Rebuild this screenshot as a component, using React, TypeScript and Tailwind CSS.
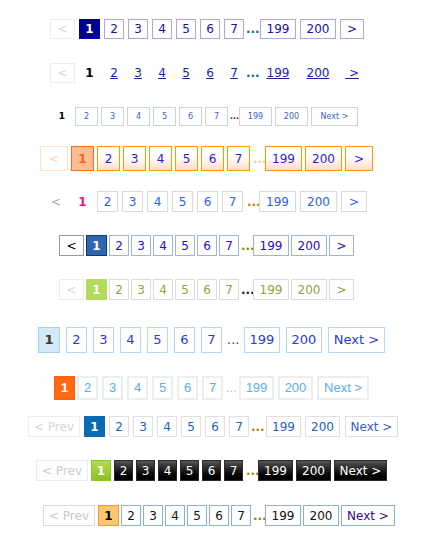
type Item = { t: string; c: string };

const PAGES = ["2", "3", "4", "5", "6", "7"];

function build(o: { prev?: Item; cur: Item; num: string; dots: Item; wide: string; next: Item }): Item[] {
  return [
    ...(o.prev ? [o.prev] : []),
    o.cur,
    ...PAGES.map((t) => ({ t, c: o.num })),
    o.dots,
    { t: "199", c: o.wide },
    { t: "200", c: o.wide },
    o.next,
  ];
}

function Row({ className, items }: { className: string; items: Item[] }) {
  return (
    <div className={`flex items-center ${className}`}>
      {items.map((it, i) => (
        <span key={i} className={it.c}>
          {it.t}
        </span>
      ))}
    </div>
  );
}

// shared box bases, one per row height
const b20 = "flex h-[20px] items-center justify-center border";
const b19 = "flex h-[19px] items-center justify-center border";
const b25 = "flex h-[25px] items-center justify-center border";
const b21 = "flex h-[21px] items-center justify-center border";
const b26 = "flex h-[26px] items-center justify-center border";
const b24 = "flex h-[24px] items-center justify-center border-2";

const r1 = build({
  prev: { t: "<", c: `${b20} w-[25px] border-[#ececec] text-[#d8d8d8]` },
  cur: { t: "1", c: `${b20} w-[21px] border-[#000099] bg-[#000099] font-bold text-white` },
  num: `${b20} w-[20px] border-[#a9a9e0] text-[#14149a]`,
  dots: { t: "...", c: "mx-[-2px] w-[12px] font-bold text-[#0e6a94]" },
  wide: `${b20} w-[36px] border-[#a9a9e0] text-[#14149a]`,
  next: { t: ">", c: `${b20} w-[24px] border-[#a9a9e0] text-[#14149a]` },
});

const r2 = build({
  prev: { t: "<", c: `${b20} w-[25px] border-[#ececec] text-[#d8d8d8]` },
  cur: { t: "1", c: `${b20} w-[21px] border-transparent font-bold text-black` },
  num: `${b20} w-[20px] border-transparent text-[#1c1cb0] underline`,
  dots: { t: "...", c: "mx-[-2px] w-[12px] font-bold text-[#0e6a94]" },
  wide: `${b20} w-[36px] border-transparent text-[#1c1cb0] underline`,
  next: { t: "\u00a0>", c: `${b20} w-[24px] border-transparent text-[#1c1cb0] underline` },
});

const r3 = build({
  cur: { t: "1", c: "mr-[4px] w-[12px] text-center text-[9px] font-bold text-black" },
  num: `${b19} w-[23px] border-[#cad5e1] text-[#3b5fd0]`,
  dots: { t: "...", c: "ml-[-1px] mr-[-2px] w-[8px] font-bold text-[#880022]" },
  wide: `${b19} w-[33px] border-[#cad5e1] text-[#3b5fd0]`,
  next: { t: "Next >", c: `${b19} w-[47px] border-[#cad5e1] text-[#3b5fd0]` },
});

const r4num = "border-[#ff9900] bg-linear-to-b from-white from-40% to-[#ffdcc8] text-[#2b1bd6]";
const r4 = build({
  prev: { t: "<", c: `${b25} w-[28px] border-[#ffe0c2] bg-white text-[#ffd2b0]` },
  cur: { t: "1", c: `${b25} w-[23px] border-[#ff6a1a] bg-[#ffbd96] font-bold text-[#ff6010]` },
  num: `${b25} w-[23px] ${r4num}`,
  dots: { t: "...", c: "mr-[-3px] w-[12px] font-bold text-[#ffc896]" },
  wide: `${b25} w-[37px] ${r4num}`,
  next: { t: ">", c: `${b25} w-[28px] ${r4num}` },
});

const r5 = build({
  prev: { t: "<", c: "flex h-[21px] w-[24px] items-center justify-center text-[#aaaaaa]" },
  cur: { t: "1", c: "flex h-[21px] w-[21px] items-center justify-center font-bold text-[#ff0a84]" },
  num: `${b21} w-[21px] border-[#dadada] text-[#2a62e6]`,
  dots: { t: "...", c: "mr-[-4px] w-[12px] font-bold text-[#b08a00]" },
  wide: `${b21} w-[37px] border-[#dadada] text-[#2a62e6]`,
  next: { t: ">", c: `${b21} w-[26px] border-[#dadada] text-[#2a62e6]` },
});

const r6 = build({
  prev: { t: "<", c: `${b21} w-[25px] border-[#999999] text-black` },
  cur: { t: "1", c: `${b21} w-[21px] border-[#12347a] bg-[#2f66b0] font-bold text-white` },
  num: `${b21} w-[20px] border-[#9fb2e4] text-[#2a0ad0]`,
  dots: { t: "...", c: "mr-[-2px] w-[12px] font-bold text-[#8a8a00]" },
  wide: `${b21} w-[36px] border-[#9fb2e4] text-[#2a0ad0]`,
  next: { t: ">", c: `${b21} w-[25px] border-[#9fb2e4] text-[#2a0ad0]` },
});

const r7 = build({
  prev: { t: "<", c: `${b21} w-[25px] border-[#ececec] text-[#d8d8d8]` },
  cur: { t: "1", c: `${b21} w-[21px] border-[#b3da5b] bg-[#b3da5b] font-bold text-white` },
  num: `${b21} w-[20px] border-[#dcdcdc] text-[#97a03c]`,
  dots: { t: "...", c: "mr-[-2px] w-[12px] font-bold text-[#1c1c40]" },
  wide: `${b21} w-[36px] border-[#dcdcdc] text-[#97a03c]`,
  next: { t: ">", c: `${b21} w-[25px] border-[#dcdcdc] text-[#97a03c]` },
});

const r8 = build({
  cur: { t: "1", c: `${b26} w-[22px] border-[#a8d0ec] bg-[#d4e9f6] font-bold text-[#3a3530]` },
  num: `${b26} w-[21px] border-[#b7d7ee] text-[#2a3ad8]`,
  dots: { t: "...", c: "ml-[-1px] mr-[-2px] w-[13px] text-[#4a3a2a]" },
  wide: `${b26} w-[36px] border-[#b7d7ee] text-[#2a3ad8]`,
  next: { t: "Next >", c: `${b26} w-[57px] border-[#b7d7ee] text-[#2a3ad8]` },
});

const r9 = build({
  cur: { t: "1", c: `${b24} mr-[-2px] w-[21px] border-[#ff6210] bg-[#ff6a13] font-bold text-white` },
  num: `${b24} w-[21px] border-[#eeeeee] text-[#5aaeee]`,
  dots: { t: "...", c: "ml-[-1px] mr-[-3px] w-[12px] text-[#b5c6d8]" },
  wide: `${b24} w-[35px] border-[#eeeeee] text-[#5aaeee]`,
  next: { t: "Next >", c: `${b24} w-[52px] border-[#eeeeee] text-[#5aaeee]` },
});

const r10 = build({
  prev: { t: "< Prev", c: `${b21} w-[52px] border-[#eeeeee] text-[#d6d6d6]` },
  cur: { t: "1", c: `${b21} w-[21px] border-[#0a6bb4] bg-[#0a6bb4] font-bold text-white` },
  num: `${b21} w-[20px] border-[#e0e0e0] text-[#2262c0]`,
  dots: { t: "...", c: "ml-[-2px] mr-[-1px] w-[12px] font-bold text-[#a88000]" },
  wide: `${b21} w-[35px] border-[#e0e0e0] text-[#2262c0]`,
  next: { t: "Next >", c: `${b21} ml-[1px] w-[53px] border-[#e0e0e0] text-[#3a5ad0]` },
});

const r11dark = "border-[#2a2a2a] bg-linear-to-b from-[#555555] to-black text-white";
const r11 = build({
  prev: { t: "< Prev", c: `${b21} w-[52px] border-[#eaeaea] text-[#cccccc]` },
  cur: { t: "1", c: `${b21} w-[20px] border-[#8fc52a] bg-linear-to-b from-[#b2dc50] to-[#8cc024] font-bold text-white` },
  num: `${b21} w-[19px] ${r11dark}`,
  dots: { t: "...", c: "mr-[-3px] w-[12px] font-bold text-[#9a8a00]" },
  wide: `${b21} w-[35px] ${r11dark}`,
  next: { t: "Next >", c: `${b21} w-[53px] ${r11dark}` },
});

const r12 = build({
  prev: { t: "< Prev", c: `${b21} mr-[1px] w-[52px] border-[#dcdcdc] text-[#c8c8c8]` },
  cur: { t: "1", c: `${b21} w-[21px] border-[#e89a40] bg-[#ffc672] font-bold text-black` },
  num: `${b21} w-[20px] border-[#8cb2d6] text-[#111111]`,
  dots: { t: "...", c: "mr-[-2px] w-[12px] font-bold text-[#8a8a00]" },
  wide: `${b21} w-[36px] border-[#8cb2d6] text-[#111111]`,
  next: { t: "Next >", c: `${b21} w-[54px] border-[#8cb2d6] text-[#3a0a80]` },
});

export default function App() {
  return (
    <div className="flex min-h-[558px] flex-col bg-white font-['DejaVu_Sans',Verdana,sans-serif] text-[12px]">
      <Row className="mt-[19px] gap-[4px] pl-[50px]" items={r1} />
      <Row className="mt-[24px] gap-[4px] pl-[50px]" items={r2} />
      <Row className="mt-[24px] gap-[3px] pl-[56px] text-[8px]" items={r3} />
      <Row className="mt-[20px] gap-[3px] pl-[40px]" items={r4} />
      <Row className="mt-[20px] gap-[4px] pl-[44px]" items={r5} />
      <Row className="mt-[23px] gap-[2px] pl-[59px]" items={r6} />
      <Row className="mt-[23px] gap-[2px] pl-[59px]" items={r7} />
      <Row className="mt-[27px] gap-[6px] pl-[38px] text-[13px]" items={r8} />
      <Row className="mt-[23px] gap-[4px] pl-[54px] font-['Liberation_Sans',Arial,sans-serif] text-[13px]" items={r9} />
      <Row className="mt-[16px] gap-[4px] pl-[28px]" items={r10} />
      <Row className="mt-[23px] gap-[3px] pl-[36px]" items={r11} />
      <Row className="mt-[24px] gap-[2px] pl-[43px]" items={r12} />
    </div>
  );
}
